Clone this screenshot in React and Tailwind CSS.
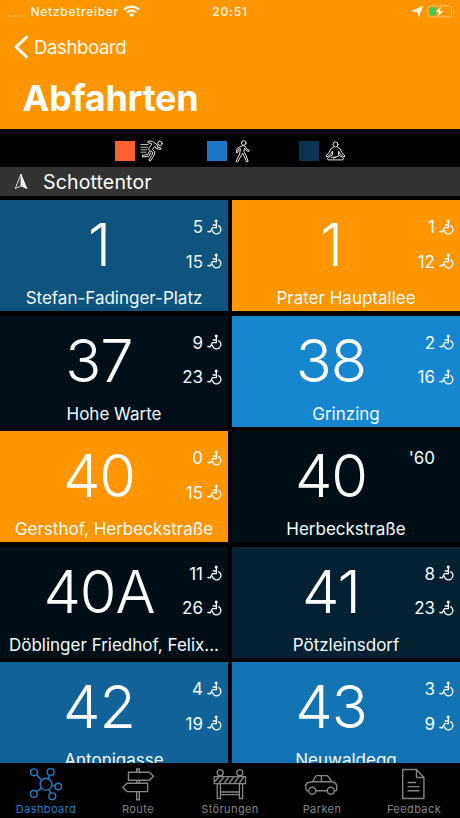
const DEPARTURES = [
  { line: '1', stop: 'Stefan-Fadinger-Platz', times: ['5', '15'], color: 'bg-[#0e547f]' },
  { line: '1', stop: 'Prater Hauptallee', times: ['1', '12'], color: 'bg-[#ff9500]' },
  { line: '37', stop: 'Hohe Warte', times: ['9', '23'], color: 'bg-[#020f18]' },
  { line: '38', stop: 'Grinzing', times: ['2', '16'], color: 'bg-[#1686cf]' },
  { line: '40', stop: 'Gersthof, Herbeckstraße', times: ['0', '15'], color: 'bg-[#ff9500]' },
  { line: '40', stop: 'Herbeckstraße', planned: "'60", color: 'bg-[#020e16]' },
  { line: '40A', stop: 'Döblinger Friedhof, Felix...', times: ['11', '26'], color: 'bg-[#020e16]' },
  { line: '41', stop: 'Pötzleinsdorf', times: ['8', '23'], color: 'bg-[#042132]' },
  { line: '42', stop: 'Antonigasse', times: ['4', '19'], color: 'bg-[#11639a]' },
  { line: '43', stop: 'Neuwaldegg', times: ['3', '9'], color: 'bg-[#1274b3]' },
];

const TABS = [
  { label: 'Dashboard', Icon: NetworkIcon, active: true },
  { label: 'Route', Icon: SignpostIcon },
  { label: 'Störungen', Icon: BarrierIcon },
  { label: 'Parken', Icon: CarIcon },
  { label: 'Feedback', Icon: DocumentIcon },
];

function WifiIcon() {
  return (
    <svg className="h-[13px] w-[17px]" viewBox="0 0 17 13" fill="none" stroke="currentColor" strokeWidth="2.2">
      <path d="M1 4.7a10.6 10.6 0 0 1 15 0" />
      <path d="M3.8 7.6a6.6 6.6 0 0 1 9.4 0" />
      <path d="M8.5 12.3 5.8 9.6a3.9 3.9 0 0 1 5.4 0z" fill="currentColor" stroke="none" />
    </svg>
  );
}

function LocationIcon() {
  return (
    <svg className="h-[11px] w-[11px]" viewBox="0 0 11 11" fill="currentColor">
      <path d="M10.6.4 6.7 10.3 5.6 5.8.4 5.100z" stroke="currentColor" strokeWidth=".8" strokeLinejoin="round" />
    </svg>
  );
}

function BatteryIcon() {
  return (
    <svg className="h-[13px] w-[28px]" viewBox="0 0 28 13" fill="none">
      <rect x=".9" y=".9" width="23.6" height="11" rx="2.8" stroke="#ffc477" strokeWidth="1" />
      <rect x="2.4" y="2.3" width="6.8" height="8.2" rx="1.5" fill="#3ccb5a" />
      <path d="M14 1.2 8.6 7h3.1l-1.2 4.9L16.2 6h-3.3z" fill="#fff" stroke="#ff9500" strokeWidth=".3" />
      <path d="M26 4.5c1.1.3 1.6 1 1.6 1.9S27.1 8 26 8.3z" fill="#ffc477" />
    </svg>
  );
}

function RunnerIcon() {
  return (
    <svg className="h-[22px] w-[24px]" viewBox="0 0 24 22" fill="none" stroke="#e8e8e8" strokeWidth="1" strokeLinecap="round" strokeLinejoin="round">
      <circle cx="20" cy="3.3" r="2.2" />
      <path d="M17.3 4.8 12.5 1.4 8.6 1l-1 1.4 4.3 1.5-2.8 3.9c-.7 1.2-.5 2 .6 2.7l3.2 1.900-1.100 3-3.100 4.700 1.400 1 3.600-5 1.200-4.400-2.500-2.300 2.400-3.100 1.300 2.300 4.700.8.300-1.400-3.500-.9z" />
      <path d="m9.300 11.500-1.600 3.200-5.200.5v1.600l6.100-.2 2-3.700" />
      <path d="M1 4.500h7M1 7.300h6.500M1 9.800h6M1 12.200h5" strokeWidth=".8" />
    </svg>
  );
}

function WalkerIcon() {
  return (
    <svg className="h-[23px] w-[15px]" viewBox="0 0 15 23" fill="none" stroke="#e8e8e8" strokeWidth="1" strokeLinecap="round" strokeLinejoin="round">
      <circle cx="8.700" cy="3" r="2.300" />
      <path d="M6.700 6 2.200 8.300 1.200 12.400l1.400.3 1-3.400 1.800-.8-.7 5.400-3.600 7.300 1.600.7 3.800-6.700 1.200-2 1.700 3.300 2.100 5.300 1.600-.6-2-5.700-2.200-3.800.6-3.400 1.500 2.200 2.700 1 .6-1.300-2.300-1.100-2.100-3z" />
    </svg>
  );
}

function SitterIcon() {
  return (
    <svg className="h-[20px] w-[21px]" viewBox="0 0 21 20" fill="none" stroke="#e8e8e8" strokeWidth="1" strokeLinecap="round" strokeLinejoin="round">
      <circle cx="10.500" cy="3.500" r="2.500" />
      <path d="M8.300 6.500 6.200 7.300 4.300 11.200 1 15l1 1.100 4-3.300 1.400-2.600v3.800l-4.200 2.600c-1.300.9-.8 2.300.6 2.300h13.400c1.400 0 1.900-1.400.6-2.300L13.600 14v-3.800l1.400 2.600 4 3.300 1-1.100-3.300-3.800-1.900-3.900-2.100-.8" />
      <path d="m8.500 17.300 5.300-2.500M6.500 16.300l4-.3" />
    </svg>
  );
}

function WheelchairIcon() {
  return (
    <svg className="h-[17px] w-[15px]" viewBox="0 0 15 17" fill="none" stroke="currentColor" strokeWidth="1.3" strokeLinecap="round" strokeLinejoin="round">
      <circle cx="9.200" cy="2.100" r="1.500" fill="currentColor" stroke="none" />
      <path d="M9.400 3.500v5.200M9.200 6H6.200M9.400 8.700H5.400L3.300 12.900.9 12.500" />
      <path d="M11.600 6.700a4.300 4.300 0 1 1-6.200 4.600" />
    </svg>
  );
}

function HeadingIcon() {
  return (
    <svg className="h-[17px] w-[14px]" viewBox="0 0 14 17" fill="none">
      <path d="M7 1 1.300 15.500 7 13z" stroke="#ddd" strokeWidth="1" strokeLinejoin="round" />
      <path d="M7 .5 13.600 16.200 7 13.300z" fill="#fff" />
    </svg>
  );
}

function NetworkIcon() {
  return (
    <svg className="h-[33px] w-[34px]" viewBox="0 0 34 33" fill="none" stroke="currentColor" strokeWidth="1.400">
      <circle cx="17" cy="16.200" r="5.900" />
      <circle cx="5" cy="4.300" r="3.400" />
      <circle cx="21.700" cy="4" r="3.400" />
      <circle cx="29.300" cy="18.500" r="3.300" />
      <circle cx="4.800" cy="25.900" r="3.400" />
      <circle cx="23.300" cy="28.300" r="3.400" />
      <path d="m7.500 6.800 5.200 5.200M20.500 7.200l-1.400 3.500M22.900 17.200l3.200.7M7.500 23.700l5-3.600M19.700 21.500l2.100 3.700" />
    </svg>
  );
}

function SignpostIcon() {
  return (
    <svg className="h-[33px] w-[34px]" viewBox="0 0 34 33" fill="none" stroke="currentColor" strokeWidth="1.400">
      <path d="M7.500 4.200h20.700l4.300 4-4.300 4H7.500zM26.600 15.200H6.200l-4.500 4.200 4.500 4.200h20.400z" />
      <path d="M15.700 4V1h2.600v3M15.700 12.200v3M18.300 12.200v3M15.700 23.600v8.100h2.600v-8.100" />
    </svg>
  );
}

function BarrierIcon() {
  return (
    <svg className="h-[33px] w-[34px]" viewBox="0 0 34 33" fill="none" stroke="currentColor" strokeWidth="1.300">
      <circle cx="7.200" cy="4.700" r="3" />
      <circle cx="26.800" cy="4.700" r="3" />
      <path d="M5.400 7.700H9v1H5.400zM25 7.700h3.600v1H25zM1.200 8.700h31.200v7H1.200z" />
      <path d="m2 13.500 4-5M6 15.500l5-7M11 15.500l5-7M16 15.500l5-7M21 15.500l5-7M26 15.500l5-7" strokeWidth="1.400" />
      <path d="M4.200 15.700h3.200v14.800H4.200zM26.400 15.700h3.200v14.800h-3.200zM7.400 24h19v2.700h-19z" />
    </svg>
  );
}

function CarIcon() {
  return (
    <svg className="h-[33px] w-[34px]" viewBox="0 0 34 33" fill="none" stroke="currentColor" strokeWidth="1.400" strokeLinejoin="round">
      <path d="M3.500 22.800H1.900c-.8-.7-1.200-2-1.200-4.300 0-2.500 1.200-3.800 3.700-4.200l3-.5 3-5.200c.4-.7.9-1 1.700-1h9.300c.9 0 1.500.3 2 1l3.500 5.200c3.500.4 4.800 1.600 4.800 4.800v3.200c0 .7-.4 1-1 1h-1.500M10.800 22.800h11.500" />
      <path d="M7.400 13.800h19.500M16.400 7.600v6.200" />
      <circle cx="7.200" cy="22.700" r="3.500" />
      <circle cx="25.800" cy="22.700" r="3.500" />
    </svg>
  );
}

function DocumentIcon() {
  return (
    <svg className="h-[33px] w-[34px]" viewBox="0 0 34 33" fill="none" stroke="currentColor" strokeWidth="1.400" strokeLinejoin="round">
      <path d="M5.700 1.500h13.800l7.400 8v21H5.700zM19.500 1.500v8h7.400" />
      <path d="M10.500 14.500h8.500M10.500 18.600h12M10.500 22.700h12" />
    </svg>
  );
}

function StatusBar() {
  return (
    <div className="grid h-[23px] grid-cols-[1fr_auto_1fr] items-center text-[12px] font-medium text-[#fff8e8]">
      <div className="flex items-center pl-2">
        <div className="flex w-[19px] gap-[2px] pt-[8px]">
          <span className="h-[2px] w-[3px] rounded-full bg-[#ffb34d]" />
          <span className="h-[2px] w-[3px] rounded-full bg-[#ffb34d]" />
          <span className="h-[2px] w-[3px] rounded-full bg-[#ffb34d]" />
          <span className="h-[2px] w-[3px] rounded-full bg-[#ffb34d]" />
        </div>
        <span className="mr-[4px] ml-[3.500px] tracking-[0.72px]">Netzbetreiber</span>
        <WifiIcon />
      </div>
      <span className="tracking-[0.9px]">20:51</span>
      <div className="flex items-center justify-end gap-[4px] pr-[5px]">
        <LocationIcon />
        <BatteryIcon />
      </div>
    </div>
  );
}

function Header() {
  return (
    <header className="h-[129px] shrink-0 bg-[#ff9500] text-white">
      <StatusBar />
      <div className="flex h-12 items-center gap-[5px] pl-[14px] text-[#fff9ec]">
        <svg className="h-6 w-[15px]" viewBox="0 0 15 24" fill="none" stroke="#fff" strokeWidth="3">
          <path d="M13.300 1.200 2.300 12l11 10.800" />
        </svg>
        <span className="text-[18.500px] leading-6 tracking-[-0.35px]">Dashboard</span>
      </div>
      <h1 className="pl-[22.500px] text-[36px] leading-[55px] font-bold tracking-[-0.3px]">Abfahrten</h1>
    </header>
  );
}

function Legend() {
  return (
    <div className="flex h-[38px] shrink-0 items-center pt-[6px] pl-[115px]">
      <div className="flex w-[92px] items-center gap-[5px]">
        <span className="h-5 w-5 bg-[#ff602c]" />
        <RunnerIcon />
      </div>
      <div className="flex w-[92px] items-center gap-[8px]">
        <span className="h-5 w-5 bg-[#1c76c4]" />
        <WalkerIcon />
      </div>
      <div className="flex items-center gap-[6px]">
        <span className="h-5 w-5 bg-[#0b3453]" />
        <SitterIcon />
      </div>
    </div>
  );
}

function DepartureTile({ line, stop, times, planned, color }) {
  return (
    <div className={`flex h-[111px] flex-col overflow-hidden text-[#f2fbff] ${color}`}>
      <div className="grid h-[86px] grid-cols-[198px_1fr]">
        <div className="pt-[8px] text-center text-[59.500px] leading-[73px] font-light tracking-[-1px] whitespace-nowrap text-white">
          {line}
        </div>
        <div className="-ml-8 flex flex-col items-end pt-[10px] pr-[6px] text-[17px] leading-[34.500px]">
          {planned ? <span className="pr-[19px]">{planned}</span> : null}
          {times?.map(function (time) {
            return (
              <span key={time} className="flex h-[34.500px] items-center gap-1">
                {time}
                <WheelchairIcon />
              </span>
            );
          })}
        </div>
      </div>
      <div className="px-1 text-center text-[17px] leading-[25px] whitespace-nowrap">{stop}</div>
    </div>
  );
}

function TabBar() {
  return (
    <nav className="grid h-[55px] shrink-0 grid-cols-5 bg-black">
      {TABS.map(function ({ label, Icon, active }) {
        return (
          <div
            key={label}
            className={`flex flex-col items-center pt-[5px] ${active ? 'text-[#1b7fc6]' : 'text-[#858585]'}`}
          >
            <Icon />
            <span className="text-[11px] leading-4 tracking-[0.4px]">{label}</span>
          </div>
        );
      })}
    </nav>
  );
}

export default function App() {
  return (
    <div className="flex h-[818px] w-[460px] flex-col overflow-hidden bg-black font-['Inter','Liberation_Sans',sans-serif]">
      <Header />
      <Legend />
      <div className="flex h-[29px] shrink-0 items-center gap-[15px] bg-[#333] pl-[14px] text-white">
        <HeadingIcon />
        <span className="text-[19.500px] leading-6 tracking-[0.15px]">Schottentor</span>
      </div>
      <main className="min-h-0 flex-1 overflow-hidden pt-1">
        <div className="grid grid-cols-2 gap-x-1 gap-y-[4.500px]">
          {DEPARTURES.map(function (departure) {
            return <DepartureTile key={departure.line + departure.stop} {...departure} />;
          })}
        </div>
      </main>
      <TabBar />
    </div>
  );
}
